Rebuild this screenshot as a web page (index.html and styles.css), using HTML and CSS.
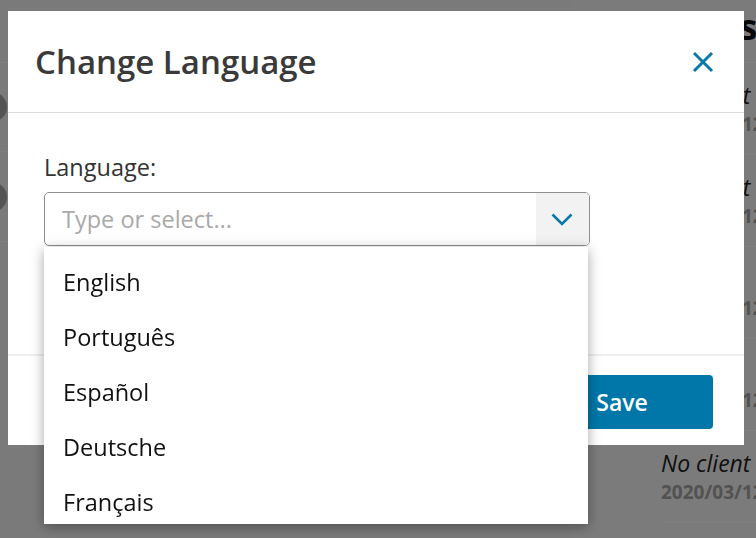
FILE: index.html
```html
<!DOCTYPE html>
<html lang="en">
<head>
<meta charset="utf-8">
<title>Change Language</title>
<link rel="stylesheet" href="styles.css">
</head>
<body>
<div class="page">
  <aside class="side">
    <div class="side-head"></div>
    <div class="side-row"><span class="avatar"></span></div>
    <div class="side-row"><span class="avatar"></span></div>
  </aside>
  <section class="panel">
    <h2 class="panel-title">Contacts</h2>
    <div class="prow"><em class="pname">No client</em><span class="pdate">2020/03/12</span></div>
    <div class="prow"><em class="pname">No client</em><span class="pdate">2020/03/12</span></div>
    <div class="prow"><em class="pname">Ana Sist</em><span class="pdate">2020/03/12</span></div>
    <div class="prow"><em class="pname"></em><span class="pdate">2020/03/12</span></div>
    <div class="prow"><em class="pname">No client</em><span class="pdate">2020/03/12</span></div>
  </section>
</div>

<div class="overlay">
  <div class="modal">
    <header class="modal-header">
      <h1 class="modal-title">Change Language</h1>
      <button class="close" aria-label="Close">
        <svg width="22" height="22" viewBox="0 0 22 22"><path d="M2 2 L20 20 M20 2 L2 20" stroke="#0a78a8" stroke-width="3" fill="none" stroke-linecap="butt"/></svg>
      </button>
    </header>
    <div class="modal-body">
      <label class="field-label">Language:</label>
      <div class="combo">
        <div class="combo-field">
          <span class="placeholder">Type or select...</span>
          <span class="combo-btn">
            <svg width="22" height="13" viewBox="0 0 22 13"><path d="M1.5 1.5 L11 11 L20.5 1.5" stroke="#0a78a8" stroke-width="2.6" fill="none"/></svg>
          </span>
        </div>
        <ul class="menu">
          <li>English</li>
          <li>Português</li>
          <li>Español</li>
          <li>Deutsche</li>
          <li>Français</li>
          <li>Italiano</li>
        </ul>
      </div>
    </div>
    <footer class="modal-footer">
      <button class="save">Save</button>
    </footer>
  </div>
</div>
</body>
</html>
```

FILE: styles.css
```css
* { box-sizing: border-box; }
html, body { margin: 0; padding: 0; }
body {
  width: 756px;
  height: 538px;
  overflow: hidden;
  font-family: "Open Sans", "Liberation Sans", sans-serif;
  background: #f4f4f4;
}

/* background page */
.page {
  display: flex;
  height: 538px;
}
.side {
  width: 571px;
  background: #f4f4f4;
}
.side-head {
  height: 63px;
  border-bottom: 1px solid #ffffff;
}
.side-row {
  height: 89px;
  border-bottom: 1px solid #ffffff;
  display: flex;
  align-items: center;
}
.side-row + .side-row { height: 90px; }
.avatar {
  width: 30px;
  height: 30px;
  border-radius: 50%;
  background: #a8a8a8;
  margin-left: -23px;
}
.panel {
  flex: 1;
  background: #f6f6f6;
  padding-left: 90px;
  overflow: hidden;
}
.panel-title {
  margin: 0;
  height: 63px;
  border-bottom: 1px solid #ffffff;
  font-size: 36px;
  font-weight: 700;
  line-height: 54px;
  color: #111;
  white-space: nowrap;
  text-indent: -62px;
}
.prow {
  height: 92px;
  border-bottom: 1px solid #ffffff;
  display: flex;
  flex-direction: column;
  padding-top: 17px;
  white-space: nowrap;
}
.pname {
  font-size: 23px;
  line-height: 30px;
  color: #1e1e1e;
  height: 30px;
}
.pdate {
  font-size: 19px;
  font-weight: 700;
  line-height: 28px;
  color: #a4a4a4;
}

/* overlay + modal */
.overlay {
  position: fixed;
  inset: 0;
  background: rgba(0, 0, 0, 0.5);
  padding: 11px 0 0 8px;
}
.modal {
  width: 736px;
  background: #fff;
}
.modal-header {
  height: 102px;
  border-bottom: 1px solid #dcdcdc;
  display: flex;
  align-items: center;
  justify-content: space-between;
  padding: 0 30px 0 27px;
}
.modal-title {
  margin: 0;
  font-size: 33px;
  font-weight: 600;
  color: #3a3a3a;
}
.close {
  border: 0;
  background: none;
  padding: 0;
  width: 22px;
  height: 22px;
  display: flex;
}
.modal-body {
  padding: 39px 154px 108px 36px;
}
.field-label {
  display: block;
  font-size: 23.5px;
  line-height: 31px;
  color: #333;
  margin-bottom: 9px;
}
.combo {
  position: relative;
}
.combo-field {
  height: 54px;
  border: 1px solid #8f8f8f;
  border-radius: 5px;
  display: flex;
  align-items: center;
  justify-content: space-between;
  padding-left: 17px;
  overflow: hidden;
}
.placeholder {
  font-size: 23.5px;
  color: #a9a9a9;
}
.combo-btn {
  width: 53px;
  height: 100%;
  background: #f2f2f2;
  display: flex;
  align-items: center;
  justify-content: center;
  padding-right: 1px;
}
.menu {
  position: absolute;
  top: 55px;
  left: 0;
  width: 544px;
  height: 277px;
  overflow: hidden;
  margin: 0;
  padding: 8px 0 0;
  list-style: none;
  background: #fff;
  box-shadow: 0 3px 12px rgba(0, 0, 0, 0.35);
  z-index: 2;
}
.menu li {
  height: 55px;
  line-height: 55px;
  padding-left: 19px;
  font-size: 23.5px;
  color: #111;
}
.modal-footer {
  border-top: 2px solid #eeeeee;
  padding: 19px 31px 16px 0;
  display: flex;
  justify-content: flex-end;
}
.save {
  width: 182px;
  height: 54px;
  border: 0;
  border-radius: 4px;
  background: #0077a8;
  color: #fff;
  font-family: "Open Sans", "Liberation Sans", sans-serif;
  font-size: 23px;
  font-weight: 600;
}
```
